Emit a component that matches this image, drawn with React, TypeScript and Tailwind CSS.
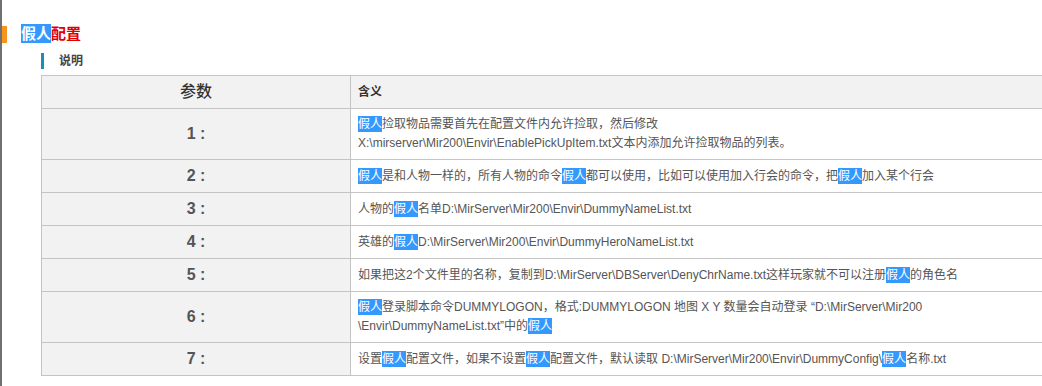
import React from "react";

const font = { fontFamily: '"Liberation Sans", "Noto Sans CJK SC", sans-serif' };

function Hi({ children }: { children: React.ReactNode }): JSX.Element {
  return <span className="bg-[#3399ff] text-white py-[1px]">{children}</span>;
}

const rows: { n: string; h: string; body: React.ReactNode }[] = [
  {
    n: "1 :",
    h: "h-[51px]",
    body: (
      <>
        <Hi>假人</Hi>捡取物品需要首先在配置文件内允许捡取，然后修改
        <br />
        X:\mirserver\Mir200\Envir\EnablePickUpItem.txt文本内添加允许捡取物品的列表。
      </>
    ),
  },
  {
    n: "2 :",
    h: "h-[33px]",
    body: (
      <>
        <Hi>假人</Hi>是和人物一样的，所有人物的命令<Hi>假人</Hi>都可以使用，比如可以使用加入行会的命令，把<Hi>假人</Hi>加入某个行会
      </>
    ),
  },
  {
    n: "3 :",
    h: "h-[33px]",
    body: (
      <>
        人物的<Hi>假人</Hi>名单D:\MirServer\Mir200\Envir\DummyNameList.txt
      </>
    ),
  },
  {
    n: "4 :",
    h: "h-[33px]",
    body: (
      <>
        英雄的<Hi>假人</Hi>D:\MirServer\Mir200\Envir\DummyHeroNameList.txt
      </>
    ),
  },
  {
    n: "5 :",
    h: "h-[33px]",
    body: (
      <>
        如果把这2个文件里的名称，复制到D:\MirServer\DBServer\DenyChrName.txt这样玩家就不可以注册<Hi>假人</Hi>的角色名
      </>
    ),
  },
  {
    n: "6 :",
    h: "h-[51px]",
    body: (
      <>
        <Hi>假人</Hi>登录脚本命令DUMMYLOGON，格式:DUMMYLOGON 地图 X Y 数量会自动登录 “D:\MirServer\Mir200
        <br />
        \Envir\DummyNameList.txt”中的<Hi>假人</Hi>
      </>
    ),
  },
  {
    n: "7 :",
    h: "h-[33px]",
    body: (
      <>
        设置<Hi>假人</Hi>配置文件，如果不设置<Hi>假人</Hi>配置文件，默认读取 D:\MirServer\Mir200\Envir\DummyConfig\<Hi>假人</Hi>名称.txt
      </>
    ),
  },
];

function App(): JSX.Element {
  return (
    <div className="w-[1042px] h-[386px] bg-white overflow-hidden border-l-2 border-[#707070]" style={font}>
      <div className="flex items-center mt-[25px] h-[18px]">
        <span className="w-[5px] h-[17px] bg-[#f7941d]" />
        <h2 className="ml-[14px] text-[15px] font-bold leading-[18px] text-[#e00000]">
          <Hi>假人</Hi>配置
        </h2>
      </div>
      <div className="flex items-center mt-[10px] ml-[39px] h-[16px]">
        <span className="w-[3px] h-[16px] bg-[#1a8fb0]" />
        <span className="ml-[15px] text-[12px] font-bold text-[#444] leading-[16px]">说明</span>
      </div>
      <table className="mt-[6px] ml-[39px] w-[1010px] border-collapse text-[12px] text-[#555]">
        <thead>
          <tr className="h-[33px] bg-[#f2f2f2]">
            <th className="w-[309px] border border-[#c4c4c4] text-[16px] font-medium text-[#333]">参数</th>
            <th className="border border-[#c4c4c4] text-left pl-[7px] font-bold text-[#333]">含义</th>
          </tr>
        </thead>
        <tbody>
          {rows.map((r) => (
            <tr key={r.n} className={r.h}>
              <td className="bg-[#f2f2f2] border border-[#c4c4c4] text-center text-[16px] font-bold text-[#555]">{r.n}</td>
              <td className="border border-[#c4c4c4] pl-[7px] leading-[19px]">{r.body}</td>
            </tr>
          ))}
        </tbody>
      </table>
    </div>
  );
}

export default App;
